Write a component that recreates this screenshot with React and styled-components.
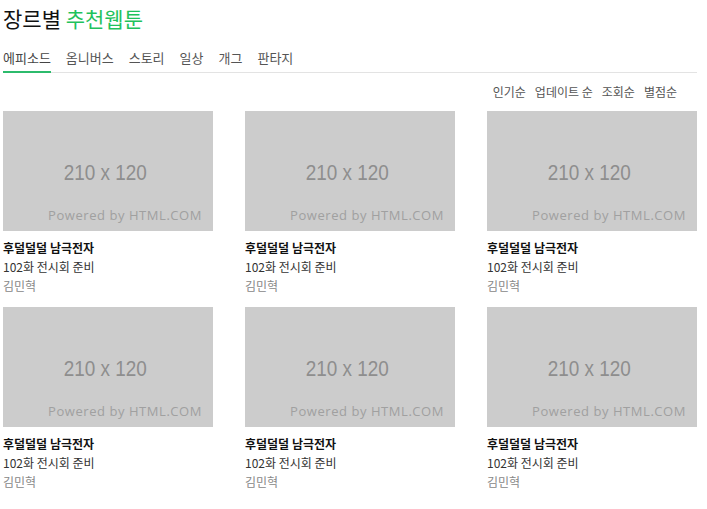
import React from 'react';
import styled, { createGlobalStyle } from 'styled-components';

const GlobalStyle = createGlobalStyle`
    body {
        margin: 0;
        background: #fff;
        font-family: "Noto Sans CJK KR", "Liberation Sans", sans-serif;
        color: #222;
    }
`

const PageWrapper = styled.div`
    width: 694px;
    padding: 0 3px;
`

const TitleWrapper = styled.h2`
    margin: 0;
    padding-top: 4px;
    font-size: 21px;
    font-weight: 400;
    line-height: 28px;
    color: #111;

    em {
        font-style: normal;
        color: #1fc25c;
    }
`

const TabList = styled.ul`
    display: flex;
    list-style: none;
    margin: 17px 0 0;
    padding: 0;
    border-bottom: 1px solid #e3e3e3;
`

const Tab = styled.li`
    font-size: 13px;
    line-height: 18px;
    padding: 0 0 4px;
    margin-right: 15px;
    color: ${props => props.active ? '#444' : '#555'};
    border-bottom: 2px solid ${props => props.active ? '#2cbb6c' : 'transparent'};
    margin-bottom: -1px;
`

const SortBar = styled.div`
    display: flex;
    justify-content: flex-end;
    gap: 9px;
    padding: 10px 20px 0 0;
    font-size: 12px;
    line-height: 18px;
    color: #555;
`

const CardGrid = styled.div`
    display: grid;
    grid-template-columns: repeat(3, 210px);
    column-gap: 32px;
    row-gap: 12px;
    margin-top: 10px;
`

const Card = styled.div`
    display: flex;
    flex-direction: column;
`

const Thumb = styled.div`
    position: relative;
    width: 210px;
    height: 120px;
    background: #cccccc;
    display: flex;
    align-items: center;
    justify-content: center;
    padding: 4px 6px 0 0;
    box-sizing: border-box;
`

const ThumbSize = styled.span`
    display: inline-block;
    font-family: "Liberation Sans", Arial, sans-serif;
    font-size: 22px;
    color: #8e8e8e;
    transform: scaleX(0.86);
`

const Powered = styled.span`
    position: absolute;
    right: 11px;
    bottom: 7px;
    font-family: "Open Sans", "DejaVu Sans", sans-serif;
    font-size: 13px;
    letter-spacing: 0.55px;
    color: #a0a0a0;
`

const CardTitle = styled.div`
    margin-top: 7px;
    font-size: 12px;
    font-weight: 700;
    line-height: 19px;
    color: #111;
`

const CardLine = styled.div`
    font-size: 12px;
    line-height: 19px;
    color: ${props => props.muted ? '#888' : '#333'};
`

const tabs = ['에피소드', '옴니버스', '스토리', '일상', '개그', '판타지'];
const sorts = ['인기순', '업데이트 순', '조회순', '별점순'];
const cards = Array.from({ length: 6 }, () => ({
    title: '후덜덜덜 남극전자',
    episode: '102화 전시회 준비',
    author: '김민혁',
}));

export default function App() {
    return (
        <React.Fragment>
            <GlobalStyle />
            <PageWrapper>
                <TitleWrapper>장르별 <em>추천웹툰</em></TitleWrapper>
                <TabList>
                    {tabs.map((t, i) => <Tab key={t} active={i === 0}>{t}</Tab>)}
                </TabList>
                <SortBar>
                    {sorts.map(s => <span key={s}>{s}</span>)}
                </SortBar>
                <CardGrid>
                    {cards.map((c, i) => (
                        <Card key={i}>
                            <Thumb>
                                <ThumbSize>210 x 120</ThumbSize>
                                <Powered>Powered by HTML.COM</Powered>
                            </Thumb>
                            <CardTitle>{c.title}</CardTitle>
                            <CardLine>{c.episode}</CardLine>
                            <CardLine muted>{c.author}</CardLine>
                        </Card>
                    ))}
                </CardGrid>
            </PageWrapper>
        </React.Fragment>
    );
}
